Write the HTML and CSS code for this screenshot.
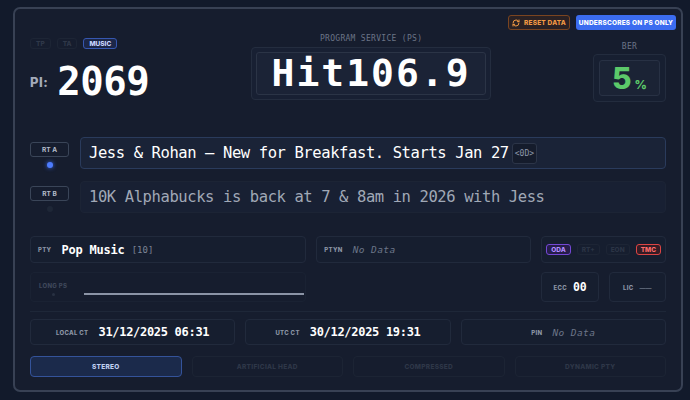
FILE: index.html
```html
<!DOCTYPE html>
<html lang="en">
<head>
  <meta charset="UTF-8" />
  <meta name="viewport" content="width=device-width, initial-scale=1.0"/>
  <title>RDS Decoder</title>
  <link rel="stylesheet" href="styles.css">
</head>
<body>

  <div class="panel">

    <!-- Botones de arriba -->
    <div class="toolbar">
      <button class="btn btn-reset">
        <svg viewBox="0 0 24 24" width="8" height="8" fill="none" stroke="currentColor" stroke-width="3" stroke-linecap="round" stroke-linejoin="round">
          <path d="M3 12a9 9 0 0 1 9-9 9.75 9.75 0 0 1 6.74 2.74L21 8"/><path d="M21 3v5h-5"/>
          <path d="M21 12a9 9 0 0 1-9 9 9.75 9.75 0 0 1-6.74-2.74L3 16"/><path d="M8 16H3v5"/>
        </svg>
        RESET DATA
      </button>
      <button class="btn btn-ps">UNDERSCORES ON PS ONLY</button>
    </div>

    <!-- PI / PS / BER -->
    <div class="cabecera">
      <div class="pi-bloque">
        <div class="flags-top">
          <span class="flag">TP</span>
          <span class="flag">TA</span>
          <span class="flag azul">MUSIC</span>
        </div>
        <div class="pi">
          <span class="pi-label">PI:</span>
          <span class="pi-valor">2069</span>
        </div>
      </div>

      <div class="ps-bloque">
        <div class="etiqueta-mono">PROGRAM SERVICE (PS)</div>
        <div class="ps-marco"><div class="ps-caja">Hit106.9</div></div>
      </div>

      <div class="ber-bloque">
        <div class="etiqueta-mono">BER</div>
        <div class="ber-marco">
          <div class="ber-caja"><span class="ber-num">5</span><span class="ber-pct">%</span></div>
        </div>
      </div>
    </div>

    <!-- Radiotexto A / B -->
    <div class="rt-fila">
      <div class="rt-lado">
        <span class="rt-tag">RT A</span>
        <span class="rt-punto activo"></span>
      </div>
      <div class="rt-texto activo">Jess &amp; Rohan – New for Breakfast. Starts Jan 27<span class="rt-cr">&lt;0D&gt;</span></div>
    </div>
    <div class="rt-fila rt-b">
      <div class="rt-lado">
        <span class="rt-tag">RT B</span>
        <span class="rt-punto"></span>
      </div>
      <div class="rt-texto">10K Alphabucks is back at 7 &amp; 8am in 2026 with Jess</div>
    </div>

    <!-- PTY, PTYN, grupos, Long PS, ECC, LIC -->
    <div class="info-grid">
      <div class="caja">
        <span class="lbl">PTY</span>
        <span class="valor">Pop Music</span>
        <span class="codigo">[10]</span>
      </div>
      <div class="caja">
        <span class="lbl">PTYN</span>
        <span class="sin-datos">No Data</span>
      </div>
      <div class="caja grupos">
        <span class="pill oda">ODA</span>
        <span class="pill">RT+</span>
        <span class="pill">EON</span>
        <span class="pill tmc">TMC</span>
      </div>

      <div class="caja long-ps">
        <div class="long-lado">
          <span class="lbl tenue">LONG PS</span>
          <span class="long-punto"></span>
        </div>
        <div class="long-linea"></div>
      </div>
      <div></div>
      <div class="ecc-lic">
        <div class="caja centro"><span class="lbl">ECC</span><span class="valor chico">00</span></div>
        <div class="caja centro"><span class="lbl">LIC</span><span class="guion">——</span></div>
      </div>
    </div>

    <div class="separador"></div>

    <!-- Hora -->
    <div class="ct-fila">
      <div class="caja centro"><span class="lbl">LOCAL CT</span><span class="valor hora">31/12/2025 06:31</span></div>
      <div class="caja centro"><span class="lbl">UTC CT</span><span class="valor hora">30/12/2025 19:31</span></div>
      <div class="caja centro"><span class="lbl">PIN</span><span class="sin-datos">No Data</span></div>
    </div>

    <!-- Identificación de decodificador -->
    <div class="modos">
      <div class="modo activo">STEREO</div>
      <div class="modo">ARTIFICIAL HEAD</div>
      <div class="modo">COMPRESSED</div>
      <div class="modo">DYNAMIC PTY</div>
    </div>

  </div>

</body>
</html>
```

FILE: styles.css
```css
/* --------- Base --------- */
* { box-sizing:border-box }
body { margin:0; background:#121a2b; font-family:Inter, "Liberation Sans", sans-serif; color:#e5e7eb }
.panel {
  width:670px; margin:7px 0 0 13px;
  border:2px solid #384154; border-radius:7px;
  background:#161d2e; padding:6px 15px 13px
}

/* --------- Toolbar --------- */
.toolbar { display:flex; justify-content:flex-end; gap:6px; height:15px; margin-right:-10px }
.btn {
  height:15px; border-radius:3px; font-family:Inter, sans-serif;
  font-size:6.5px; font-weight:800; letter-spacing:.2px;
  display:flex; align-items:center; justify-content:center; gap:4px; padding:0; cursor:pointer
}
.btn-reset { width:62px; border:1px solid #7a4420; background:#2a2124; color:#f39a44 }
.btn-ps { width:100px; border:none; background:#3b6cf0; color:#fff }

/* --------- Cabecera --------- */
.cabecera { display:flex; justify-content:space-between; align-items:flex-start; margin-top:4px; height:68px }
.pi-bloque { padding-top:4px }
.flags-top { display:flex; gap:6px }
.flag {
  height:11px; padding:0 5px; border:1px solid #1d2535; border-radius:3px;
  font-size:6.5px; font-weight:800; color:#2f3849; display:flex; align-items:center
}
.flag.azul { border-color:#3657b0; background:#1c2748; color:#c9d6ff }
.pi { display:flex; align-items:center; gap:9px; margin-top:13px; height:40px }
.pi-label { font-size:13px; font-weight:800; color:#a3abb9; letter-spacing:.5px }
.pi-valor {
  font-family:"DejaVu Sans Mono", monospace; font-weight:bold;
  font-size:39px; line-height:40px; letter-spacing:-.5px; color:#fff
}

.etiqueta-mono {
  font-family:"DejaVu Sans Mono", monospace; font-size:8px; line-height:10px;
  letter-spacing:.3px; color:#6b7486; text-align:center
}
.ps-bloque { width:240px }
.ps-marco { margin-top:3px; height:53px; padding:4px; border:1px solid #242d3f; border-radius:4px; background:#182033 }
.ps-caja {
  height:43px; border:1px solid #2b3446; border-radius:3px; background:#1b2336;
  font-family:"DejaVu Sans Mono", monospace; font-weight:bold; font-size:38px;
  line-height:41px; letter-spacing:2px; color:#fff; text-align:center
}

.ber-bloque { width:73px; margin-top:8px }
.ber-marco { margin-top:2px; height:48px; padding:5px; border:1px solid #232c3e; border-radius:4px; background:#171f31 }
.ber-caja {
  height:36px; border:1px solid #283144; border-radius:3px; background:#1b2335;
  display:flex; align-items:baseline; justify-content:center; line-height:34px; color:#5cc96a
}
.ber-num { font-size:30px; font-weight:800 }
.ber-pct { font-size:12px; font-weight:800; margin-left:3px }

/* --------- Radiotexto --------- */
.rt-fila { display:flex; gap:11px; margin-top:35px }
.rt-fila.rt-b { margin-top:12px }
.rt-lado { width:39px; display:flex; flex-direction:column; align-items:center; gap:5px; padding-top:5px }
.rt-tag {
  width:39px; height:15px; border:1px solid #3a4558; border-radius:3px;
  font-size:6.5px; font-weight:700; color:#b4bccb;
  display:flex; align-items:center; justify-content:center
}
.rt-punto { width:6px; height:6px; border-radius:50%; background:#1e2737 }
.rt-punto.activo { background:#4d7cfe; box-shadow:0 0 4px #3b6cf0 }
.rt-texto {
  flex:1; height:32px; border:1px solid #1c2435; border-radius:4px; background:#182033;
  padding:0 8px; display:flex; align-items:center; white-space:nowrap;
  font-family:"DejaVu Sans Mono", monospace; font-size:15.5px; letter-spacing:-.4px; color:#a0a8b6
}
.rt-texto.activo { border-color:#2a3b5c; background:#1a2337; color:#fff }
.rt-cr {
  margin-left:3px; height:21px; padding:0 2px; border:1px solid #2c3548; border-radius:3px;
  background:#151c2c; font-size:8px; letter-spacing:0; color:#8d97aa;
  display:flex; align-items:center
}

/* --------- Cajas de datos --------- */
.info-grid {
  display:grid; grid-template-columns:9fr 7fr 4fr; grid-template-rows:27px 30px;
  gap:9px 10px; margin-top:23px
}
.caja {
  border:1px solid #212a3c; border-radius:4px; background:#161e2f;
  display:flex; align-items:center; gap:10px; padding:0 7px
}
.caja.centro { justify-content:center }
.lbl { font-size:6px; font-weight:800; letter-spacing:.3px; color:#8b94a4 }
.lbl.tenue { color:#3e475a }
.valor { font-family:"DejaVu Sans Mono", monospace; font-weight:bold; font-size:12px; letter-spacing:-.2px; color:#fff }
.valor.chico { font-size:11.5px }
.valor.hora { letter-spacing:-.3px }
.codigo { font-family:"DejaVu Sans Mono", monospace; font-size:9px; color:#7d8696; margin-left:-3px }
.sin-datos { font-family:"DejaVu Sans Mono", monospace; font-style:italic; font-size:9.5px; letter-spacing:.4px; color:#6b7588 }
.guion { font-size:6px; color:#8e97a8 }

.grupos { gap:6px; padding:0 4px }
.pill {
  height:11px; padding:0 4px; border:1px solid #1d2535; border-radius:3px;
  font-size:6.5px; font-weight:800; color:#2b3445; display:flex; align-items:center
}
.pill.oda { border-color:#7448d4; background:#261d4a; color:#b38cff }
.pill.tmc { border-color:#dc4545; background:#351c25; color:#ff6b6b }

.long-ps { border-color:#1a2233; background:#161d2e; padding:0 0 0 8px; gap:17px; align-items:stretch }
.long-lado { display:flex; flex-direction:column; align-items:center; gap:4px; padding-top:9px }
.long-punto { width:3px; height:3px; border-radius:50%; background:#283142 }
.long-linea { flex:1; height:1.5px; background:#8b94a6; margin:20px 1px 0 0 }

.ecc-lic { display:grid; grid-template-columns:1fr 1fr; gap:10px }
.ecc-lic .caja { gap:6px }

.separador { height:1px; background:#1e2738; margin-top:9px }

.ct-fila { display:grid; grid-template-columns:repeat(3, 1fr); gap:10px; margin-top:7px; height:26px }

/* --------- Modos --------- */
.modos { display:grid; grid-template-columns:repeat(4, 1fr); gap:10px; margin-top:11px; height:21px }
.modo {
  border:1px solid #1c2434; border-radius:4px;
  font-size:6.5px; font-weight:800; letter-spacing:.3px; color:#2e3748;
  display:flex; align-items:center; justify-content:center
}
.modo.activo { border-color:#34539a; background:#1b2a4b; color:#c0d0f3 }
```
